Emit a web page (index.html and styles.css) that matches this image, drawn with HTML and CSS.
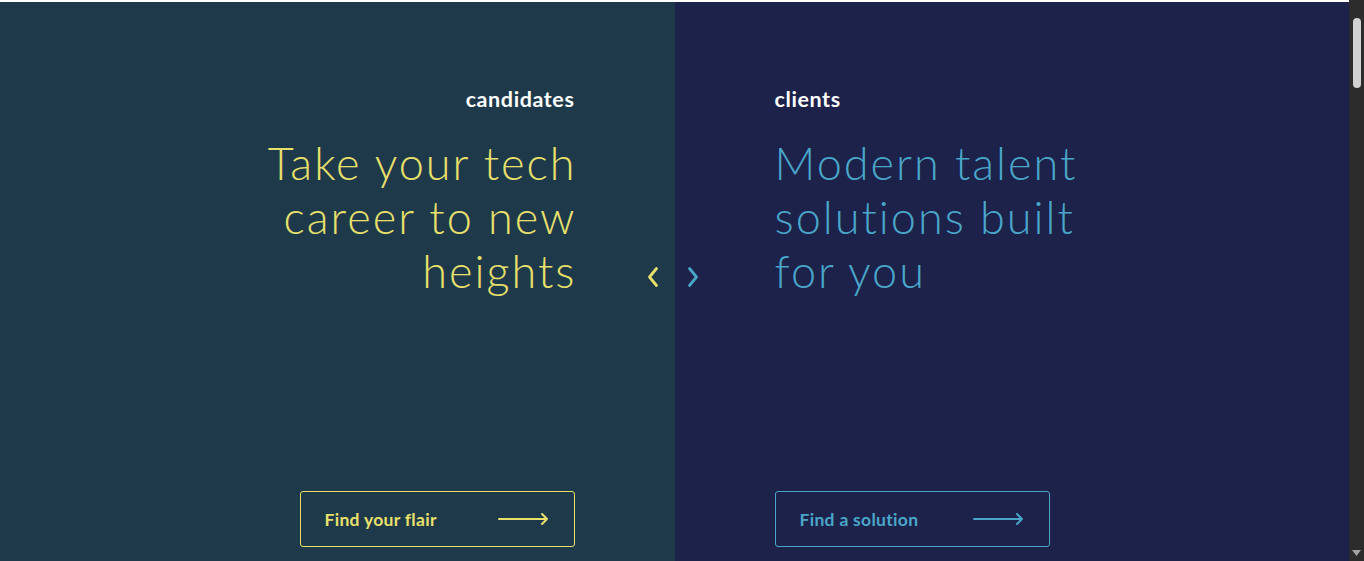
FILE: index.html
```html
<!DOCTYPE html>
<html lang="en">
<head>
<meta charset="utf-8">
<title>Flair</title>
<link rel="stylesheet" href="styles.css">
</head>
<body>
<div class="page">
  <main class="hero">
    <section class="panel panel-candidates">
      <div class="panel-inner">
        <h2 class="label">candidates</h2>
        <h1 class="headline">Take your tech career to new heights</h1>
        <a class="cta" href="#">
          <span>Find your flair</span>
          <svg class="arrow" width="51" height="12" viewBox="0 0 51 12" fill="none" stroke="currentColor" stroke-width="2" stroke-linecap="round" stroke-linejoin="round"><path d="M1 6h48M44 1l5 5-5 5"/></svg>
        </a>
      </div>
    </section>
    <section class="panel panel-clients">
      <div class="panel-inner">
        <h2 class="label">clients</h2>
        <h1 class="headline">Modern talent solutions built for you</h1>
        <a class="cta" href="#">
          <span>Find a solution</span>
          <svg class="arrow" width="51" height="12" viewBox="0 0 51 12" fill="none" stroke="currentColor" stroke-width="2" stroke-linecap="round" stroke-linejoin="round"><path d="M1 6h48M44 1l5 5-5 5"/></svg>
        </a>
      </div>
    </section>
    <div class="switcher">
      <svg class="chev chev-left" width="12" height="22" viewBox="0 0 12 22" fill="none" stroke="currentColor" stroke-width="2.8" stroke-linecap="round" stroke-linejoin="round"><path d="M9.5 2.5 2.5 11l7 8.5"/></svg>
      <svg class="chev chev-right" width="12" height="22" viewBox="0 0 12 22" fill="none" stroke="currentColor" stroke-width="2.8" stroke-linecap="round" stroke-linejoin="round"><path d="M2.5 2.5 9.5 11l-7 8.5"/></svg>
    </div>
  </main>
</div>
<div class="scrollbar" aria-hidden="true">
  <div class="scroll-btn"></div>
  <div class="scroll-track"><div class="scroll-thumb"></div></div>
  <div class="scroll-btn"><svg width="9" height="6" viewBox="0 0 9 6"><path d="M0 0h9L4.5 6z" fill="#a3a3a3"/></svg></div>
</div>
</body>
</html>
```
FILE: styles.css
```css
html, body {
  height: 100%;
}
body {
  margin: 0;
  display: flex;
  overflow: hidden;
  background: #ffffff;
  font-family: Lato, "Open Sans", sans-serif;
}
.page {
  flex: 1;
  padding-top: 2px;
  background: #ffffff;
}
.hero {
  position: relative;
  display: grid;
  grid-template-columns: 1fr 1fr;
  height: 559px;
}
.panel {
  display: flex;
  flex-direction: column;
  padding: 85px 0 14px;
}
.panel-candidates {
  background: #1e3a4a;
  color: #e9e06c;
  align-items: flex-end;
  padding-right: 100px;
}
.panel-clients {
  background: #1c2249;
  color: #4aa6c9;
  align-items: flex-start;
  padding-left: 100px;
}
.panel-inner {
  display: flex;
  flex-direction: column;
  height: 100%;
  width: 345px;
}
.panel-candidates .panel-inner {
  align-items: flex-end;
  text-align: right;
}
.panel-clients .panel-inner {
  align-items: flex-start;
  text-align: left;
}
.label {
  margin: 0;
  color: #ffffff;
  font-size: 21.5px;
  font-weight: 700;
  line-height: 24px;
  letter-spacing: 0.6px;
}
.headline {
  margin: 25px 0 0;
  font-size: 45px;
  font-weight: 300;
  line-height: 54px;
  letter-spacing: 2px;
}
.panel-candidates .headline {
  margin-right: -2px;
}
.cta {
  margin-top: auto;
  box-sizing: border-box;
  width: 275px;
  height: 56px;
  display: flex;
  align-items: center;
  justify-content: space-between;
  padding: 0 25px 0 24px;
  border: 1px solid currentColor;
  border-radius: 3px;
  color: inherit;
  text-decoration: none;
  font-size: 17.5px;
  font-weight: 700;
  letter-spacing: 0.3px;
}
.switcher {
  position: absolute;
  left: 50%;
  top: 264px;
  transform: translateX(-50%);
  display: flex;
  gap: 28px;
  margin-left: -2px;
}
.chev-left { color: #e9e06c; }
.chev-right { color: #4aa6c9; }

.scrollbar {
  width: 15px;
  flex: none;
  display: flex;
  flex-direction: column;
  background: #2c2c2c;
}
.scroll-btn {
  height: 17px;
  display: flex;
  align-items: center;
  justify-content: center;
}
.scroll-track {
  flex: 1;
  display: flex;
  justify-content: center;
}
.scroll-thumb {
  width: 8px;
  height: 70px;
  margin-top: 1px;
  border-radius: 4px;
  background: #d2d2d2;
}
```
